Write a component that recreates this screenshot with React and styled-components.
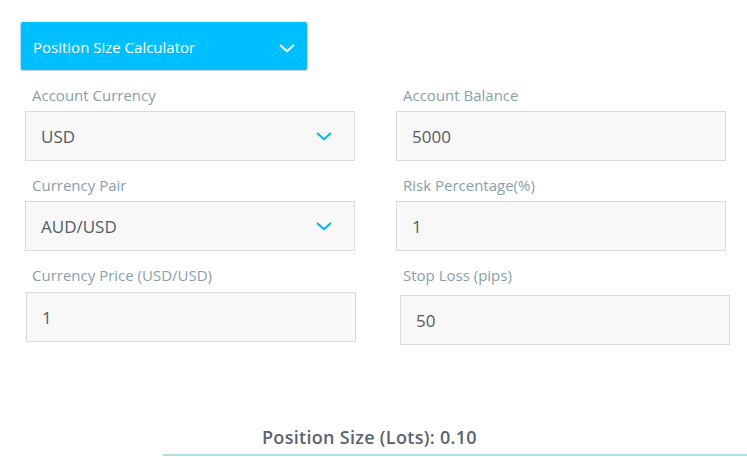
import React from 'react';
import styled, {createGlobalStyle} from "styled-components";

const GlobalStyle = createGlobalStyle`
  body {
    margin: 0;
    background: #fff;
    font-family: "Open Sans", "Noto Sans", sans-serif;
  }
`;

const fields = [
    {label: 'Account Currency', value: 'USD', select: true},
    {label: 'Account Balance', value: '5000'},
    {label: 'Currency Pair', value: 'AUD/USD', select: true},
    {label: 'Risk Percentage(%)', value: '1'},
    {label: 'Currency Price (USD/USD)', value: '1', nudge: 1},
    {label: 'Stop Loss (pips)', value: '50', nudge: 4},
];

function Chevron({color, size}) {
    return (
        <svg width={size} height={size * 0.55} viewBox="0 0 16 9" fill="none">
            <path d="M1.5 1.5 L8 7.5 L14.5 1.5" stroke={color} strokeWidth="2" strokeLinecap="round" strokeLinejoin="round"/>
        </svg>
    )
}

export default function App() {
    return (
        <Page>
            <GlobalStyle/>
            <Header>
                <span>Position Size Calculator</span>
                <Chevron color="#fff" size={16}/>
            </Header>
            <Form>
                {
                    fields.map((f, i) => (
                        <Field key={i}>
                            <Label>{f.label}</Label>
                            <Box nudge={f.nudge || 0}>
                                <span>{f.value}</span>
                                {f.select && <Chevron color="#00b4f0" size={16}/>}
                            </Box>
                        </Field>
                    ))
                }
            </Form>
            <Result>
                <ResultText>Position Size (Lots): 0.10</ResultText>
            </Result>
        </Page>
    )
}

const Page = styled.div`
  padding: 22px 0 0 20px;
  height: 457px;
  box-sizing: border-box;
  overflow: hidden;
`;

const Header = styled.div`
  width: 288px;
  height: 49px;
  box-sizing: border-box;
  background: #00bfff;
  border: 1px solid #c9d3d8;
  border-top-color: #00bfff;
  border-radius: 3px;
  display: flex;
  align-items: center;
  justify-content: space-between;
  padding: 0 12px 0 12px;
  color: #fff;
  font-size: 15px;
  svg {
    margin-top: 4px;
  }
`;

const Form = styled.div`
  display: grid;
  grid-template-columns: 330px 330px;
  column-gap: 41px;
  row-gap: 14px;
  padding: 14px 0 0 5px;
`;

const Field = styled.div`
  display: flex;
  flex-direction: column;
`;

const Label = styled.div`
  font-size: 15px;
  line-height: 20px;
  color: #86a1ab;
  padding-left: 7px;
  margin-bottom: 6px;
`;

const Box = styled.div`
  width: 330px;
  height: 50px;
  box-sizing: border-box;
  border: 1px solid #d9dcde;
  background: #f8f8f8;
  display: flex;
  align-items: center;
  justify-content: space-between;
  padding: 0 22px 0 15px;
  font-size: 17px;
  color: #555b63;
  margin-left: ${p => p.nudge}px;
  margin-top: ${p => p.nudge === 4 ? 4 : p.nudge === 1 ? 1 : 0}px;
  svg {
    margin-top: 1px;
  }
`;

const Result = styled.div`
  margin: 80px 0 0 143px;
  border-bottom: 2px solid #b3dde8;
  padding: 0 0 5px 99px;
`;

const ResultText = styled.div`
  font-size: 18px;
  font-weight: 600;
  letter-spacing: 0.3px;
  color: #5a6371;
  line-height: 24px;
`;
